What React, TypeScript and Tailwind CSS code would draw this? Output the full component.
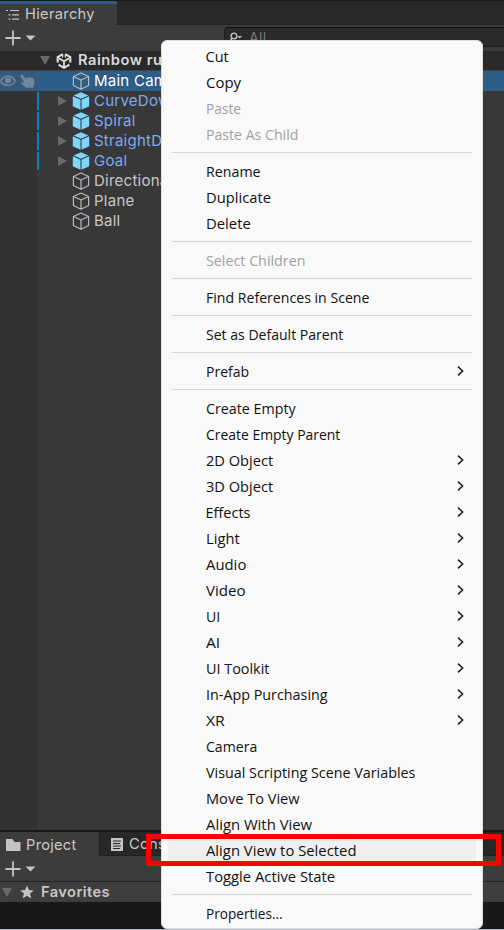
import React from "react";

type Item = { label: string; w: number; disabled?: boolean; sub?: boolean; active?: boolean };

const groups: Item[][] = [
  [
    { label: "Cut", w: 22 },
    { label: "Copy", w: 34 },
    { label: "Paste", w: 34, disabled: true },
    { label: "Paste As Child", w: 91.5, disabled: true },
  ],
  [
    { label: "Rename", w: 54 },
    { label: "Duplicate", w: 64 },
    { label: "Delete", w: 44 },
  ],
  [{ label: "Select Children", w: 98.5, disabled: true }],
  [{ label: "Find References in Scene", w: 162.5 }],
  [{ label: "Set as Default Parent", w: 136.5 }],
  [{ label: "Prefab", w: 42.5, sub: true }],
  [
    { label: "Create Empty", w: 88.5 },
    { label: "Create Empty Parent", w: 133.5 },
    { label: "2D Object", w: 66.5, sub: true },
    { label: "3D Object", w: 66.5, sub: true },
    { label: "Effects", w: 44, sub: true },
    { label: "Light", w: 32.5, sub: true },
    { label: "Audio", w: 39, sub: true },
    { label: "Video", w: 38.5, sub: true },
    { label: "UI", w: 13.5, sub: true },
    { label: "AI", w: 13, sub: true },
    { label: "UI Toolkit", w: 62.5, sub: true },
    { label: "In-App Purchasing", w: 120.5, sub: true },
    { label: "XR", w: 17.5, sub: true },
    { label: "Camera", w: 50.5 },
    { label: "Visual Scripting Scene Variables", w: 208.3 },
    { label: "Move To View", w: 92.5 },
    { label: "Align With View", w: 105.5 },
    { label: "Align View to Selected", w: 149.3, active: true },
    { label: "Toggle Active State", w: 128.5 },
  ],
  [{ label: "Properties...", w: 76 }],
];

function FitText({ text, width }: { text: string; width: number }) {
  const ref = React.useRef<HTMLSpanElement>(null);
  const [scale, setScale] = React.useState(1);
  React.useLayoutEffect(() => {
    const natural = ref.current?.offsetWidth;
    if (natural) setScale((width + 1) / natural);
  }, [width]);
  return (
    <span ref={ref} className="inline-block origin-left whitespace-nowrap pt-[2px]" style={{ transform: `scaleX(${scale})` }}>
      {text}
    </span>
  );
}

function Cube({ filled = false }: { filled?: boolean }) {
  return filled ? (
    <svg className="h-[18px] w-[18px] shrink-0" viewBox="0 0 18 18">
      <path d="M9 .2 16.4 3.4 9 6.7 1.6 3.4Z" fill="#7fd6fd" />
      <path d="M.8 4.3 8.5 7.8V17.7L.8 14.2Z" fill="#7fd6fd" />
      <path d="M17.2 4.3 9.5 7.8V17.7L17.2 14.2Z" fill="#7fd6fd" />
    </svg>
  ) : (
    <svg className="h-[18px] w-[18px] shrink-0" viewBox="0 0 18 18" fill="none" stroke="#b9b9b9" strokeWidth="1.2" strokeLinejoin="round">
      <path d="M9 1 16.6 4.5V13.5L9 17.3 1.4 13.5V4.5Z M1.4 4.5 9 8 16.6 4.5M9 8V17" />
    </svg>
  );
}

function AddButton() {
  return (
    <svg className="h-[18px] w-[32px]" viewBox="0 0 32 18">
      <path d="M.5 9H15.5M8 1.5V16.5" stroke="#c4c4c4" strokeWidth="1.8" />
      <path d="M20.5 6.5H30.5L25.5 11.5Z" fill="#c4c4c4" />
    </svg>
  );
}

const tree = [
  { label: "CurveDown", prefab: true },
  { label: "Spiral", prefab: true },
  { label: "StraightDown", prefab: true },
  { label: "Goal", prefab: true },
  { label: "Directional Light", prefab: false },
  { label: "Plane", prefab: false },
  { label: "Ball", prefab: false },
];

export default function App() {
  return (
    <div className="relative flex h-[930px] w-[504px] flex-col overflow-hidden bg-[#383838] font-['Inter',sans-serif] text-[15px] text-[#c8c8c8]">
      <div className="flex h-[25px] shrink-0 border-b border-[#242424] border-t border-t-[#191919] bg-[#282828]">
        <div className="-mb-px flex w-[117px] items-center border-t-[3px] border-[#2c5d87] bg-[#3c3c3c] pl-[6px]">
          <svg className="mr-[6px] h-3 w-[13px]" viewBox="0 0 13 12" stroke="#c4c4c4" strokeWidth="1.2">
            <path d="M0 1.5H2M4 1.5H13M2.5 5.8H4.5M6 5.8H13M2.5 10.2H4.5M6 10.2H13" />
          </svg>
          <span className="text-[14.7px] tracking-[0.3px]">Hierarchy</span>
        </div>
      </div>
      <div className="flex h-[26px] shrink-0 items-center bg-[#3c3c3c] pl-[5px]">
        <AddButton />
        <div className="ml-[187px] mt-[-3px] flex h-[20px] flex-1 items-center rounded-l-[4px] border border-r-0 border-[#1f1f1f] border-t-[#0d0d0d] bg-[#2a2a2a] pl-[5px] pt-px">
          <svg className="h-[12px] w-[13px]" viewBox="0 0 13 12" fill="none" stroke="#c4c4c4" strokeWidth="1.4">
            <circle cx="4" cy="5" r="2.9" />
            <path d="M2 7 0 10" />
            <path d="M7.5 5H12L9.7 7.5Z" fill="#c4c4c4" stroke="none" />
          </svg>
          <span className="ml-[6px] text-[14px] tracking-[0.3px] text-[#777]">All</span>
        </div>
      </div>
      <div className="flex h-5 shrink-0 items-center border-b border-[#444] bg-[#2a2a2a] pl-10 font-semibold">
        <svg className="h-[9px] w-[10px]" viewBox="0 0 10 9"><path d="M0 0H10L5 9Z" fill="#696969" /></svg>
        <svg className="ml-[6px] h-4 w-4" viewBox="0 0 16 16" fill="none" stroke="#e1e1e1" strokeWidth="2.1">
          <path d="M6.8 1.2 1.7 4.2V9.5M9.2 1.2 14.3 4.2V9.5M2.6 11.6 8 14.8 13.4 11.6" />
          <path d="M8 8.2V14M8 8.2 3 5.3M8 8.2 13 5.3" strokeWidth="1.8" />
          <path d="M6.6 1V4.4M9.4 1V4.4" strokeWidth="1.2" />
        </svg>
        <span className="ml-[6px] whitespace-nowrap text-[14.7px] tracking-[0.5px] text-[#dadada]">Rainbow run</span>
      </div>
      <div className="flex h-5 shrink-0 items-center bg-[#2c5d87] text-white">
        <div className="flex h-5 w-[37px] items-center bg-[#36597b]">
          <svg className="h-[12px] w-4" viewBox="0 0 16 12" fill="none" stroke="#70869e" strokeWidth="1.5">
            <path d="M.5 6C4-.5 12-.5 15.3 6 12 12 4 12 .5 6Z" />
            <circle cx="8" cy="5.5" r="3" fill="#70869e" stroke="none" />
          </svg>
          <svg className="ml-1 h-[15px] w-[15px]" viewBox="0 0 15 15" fill="#70869e">
            <path d="M.5 1.2C1.5 0 2.6.6 3.2 1.5L6 5 6.5 3.4 8.3 3.2 8.8 3.8 10.3 3 11 3.8 12.7 3.5 14.3 6V10.5L13 13.7H6L1 9.6 1 8.2 4 8.5 .6 2.4Z" />
          </svg>
        </div>
        <div className="flex items-center pl-[35px]"><Cube /><span className="ml-1 whitespace-nowrap tracking-[0.25px]">Main Camera</span></div>
      </div>
      <div className="flex min-h-0 flex-1">
        <div className="w-[37px] bg-[#323232]" />
        <div className="flex flex-1 flex-col">
          {tree.map((n) => (
            <div key={n.label} className="flex h-5 items-center">
              <div className={n.prefab ? "h-[18px] w-[2px] bg-[#0f81be]" : "h-[18px] w-[2px]"} />
              <svg className="ml-[19px] mr-[5px] h-[10px] w-[9px]" viewBox="0 0 9 10">
                {n.prefab && <path d="M0 0V10L9 5Z" fill="#696969" />}
              </svg>
              <Cube filled={n.prefab} />
              <span className={n.prefab ? "ml-1 whitespace-nowrap tracking-[0.25px] text-[#7faaf0]" : "ml-1 whitespace-nowrap tracking-[0.25px]"}>{n.label}</span>
            </div>
          ))}
        </div>
      </div>
      <div className="flex h-[26px] shrink-0 border-t-2 border-[#191919] bg-[#282828]">
        <div className="flex w-[99px] items-center bg-[#3c3c3c] pl-[6px] pt-[2px]">
          <svg className="mr-[5px] h-[13px] w-[15px]" viewBox="0 0 15 13"><path d="M0 0H6.5L8.5 3H14.5V12H0Z" fill="#c4c4c4" /></svg>
          <span className="text-[14.7px] tracking-[0.25px]">Project</span>
        </div>
        <div className="flex flex-1 items-center border-b border-l border-[#202020] pl-[11px] pt-[2px]">
          <svg className="mr-[6px] h-[13px] w-3" viewBox="0 0 12 13"><path d="M0 0H12V13H0Z" fill="#c4c4c4" /><path d="M2 3H10M2 5.5H9M2 8H10M2 10.5H9" stroke="#282828" strokeWidth="1.2" /></svg>
          <span className="text-[14.7px] tracking-[0.25px]">Console</span>
        </div>
      </div>
      <div className="flex h-[26px] shrink-0 items-center border-b border-[#232323] bg-[#3c3c3c] pl-[5px]"><AddButton /></div>
      <div className="flex h-5 shrink-0 items-center bg-[#3e3e3e] pl-[2px] font-semibold">
        <svg className="h-[9px] w-[10px]" viewBox="0 0 10 9"><path d="M0 0H10L5 9Z" fill="#696969" /></svg>
        <svg className="ml-2 h-[14px] w-[14px]" viewBox="0 0 14 14"><path d="M7 .5 9 5 13.8 5.4 10.1 8.6 11.3 13.4 7 10.8 2.7 13.4 3.9 8.6.2 5.4 5 5Z" fill="#c4c4c4" /></svg>
        <span className="ml-[7px] text-[14.7px] tracking-[0.4px]">Favorites</span>
      </div>
      <div className="h-[28px] shrink-0 border-b border-[#b0b4bb] bg-[#191919]" />

      <div className="absolute left-[161px] top-[40px] flex h-[889px] w-[322px] flex-col rounded-[6px] border border-[#dedede] bg-[#f9f9f9] pt-[3px] font-['Open_Sans','Noto_Sans',sans-serif] text-[14.5px] text-[#111]">
        {groups.map((group, i) => (
          <React.Fragment key={i}>
            {i > 0 && <div className="mx-[10px] mb-[6px] mt-1 h-px shrink-0 bg-[#d5d5d5]" />}
            {group.map((item) => (
              <div key={item.label} className={item.active ? "mx-[6px] flex h-[26px] shrink-0 items-center bg-[#efefef] pb-[2px] pl-[37.5px] pr-2" : item.disabled ? "mx-[6px] flex h-[26px] shrink-0 items-center pb-[2px] pl-[37.5px] pr-2 text-[#a2a2a2]" : "mx-[6px] flex h-[26px] shrink-0 items-center pb-[2px] pl-[37.5px] pr-2"}>
                <FitText text={item.label} width={item.w} />
                {item.sub && (
                  <svg className="ml-auto mr-[4px] h-[10px] w-[7px]" viewBox="0 0 7 10" fill="none" stroke="#222" strokeWidth="1.6"><path d="M1 .6 5.6 5 1 9.4" /></svg>
                )}
              </div>
            ))}
          </React.Fragment>
        ))}
      </div>
      <div className="absolute left-[146px] top-[834px] h-[32px] w-[355px] border-[5px] border-[#fe0000]" />
    </div>
  );
}
